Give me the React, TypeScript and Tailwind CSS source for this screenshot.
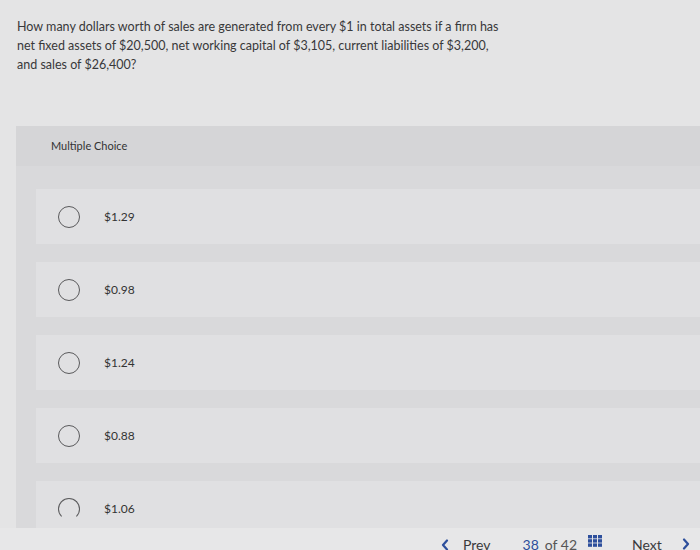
const options = ["$1.29", "$0.98", "$1.24", "$0.88", "$1.06"];

function GridIcon() {
  return (
    <svg width="14" height="12" viewBox="0 0 14 12" className="block">
      {[0, 1, 2].map((r) =>
        [0, 1, 2].map((c) => (
          <rect key={`${r}-${c}`} x={c * 5} y={r * 4.2} width="4" height="3.4" fill="#2d4f9c" />
        ))
      )}
    </svg>
  );
}

function Chevron({ dir }: { dir: "left" | "right" }) {
  return (
    <svg width="8" height="12" viewBox="0 0 8 12" className="block">
      <path
        d={dir === "left" ? "M6 1.5 L2 6 L6 10.5" : "M2 1.5 L6 6 L2 10.5"}
        fill="none"
        stroke="#2d4f9c"
        strokeWidth="2.2"
        strokeLinecap="round"
        strokeLinejoin="round"
      />
    </svg>
  );
}

export default function App() {
  return (
    <div
      className="relative w-[700px] h-[550px] overflow-hidden bg-[#e4e4e5] text-[#2f2f31]"
      style={{ fontFamily: "Lato, 'Open Sans', sans-serif" }}
    >
      <p className="pl-[17px] pr-[190px] pt-[17px] text-[12.5px] leading-[19px] text-[#38383a]">
        How many dollars worth of sales are generated from every $1 in total assets if a firm has net fixed
        assets of $20,500, net working capital of $3,105, current liabilities of $3,200, and sales of $26,400?
      </p>

      <div className="mt-[52px] ml-[16px] bg-[#d9d9db]">
        <div className="h-[40px] flex items-center pl-[35px] bg-[#d5d5d7] text-[11px] text-[#333]">
          Multiple Choice
        </div>
        <div className="pl-[20px] pt-[23px] flex flex-col gap-[18px]">
          {options.map((o, i) => (
            <div key={o} className="h-[55px] flex items-center pl-[22px] bg-[#e0e0e2]">
              <span
                className={
                  "w-[22px] h-[22px] rounded-full border-[1.5px] border-[#5a5a5c] shrink-0 " +
                  (i === 4 ? "border-b-transparent" : "")
                }
              />
              <span className="ml-[24px] text-[12px] text-[#333]">{o}</span>
            </div>
          ))}
        </div>
      </div>

      <div className="absolute left-0 right-0 top-[528px] h-[30px] bg-[#e7e7e8] flex items-start pt-[6px] text-[14px] text-[#3a3a3c]">
        <span className="ml-[441px] mt-[5px]">
          <Chevron dir="left" />
        </span>
        <span className="ml-[14px]">Prev</span>
        <span className="ml-[32px] text-[#2d4f9c]">38</span>
        <span className="ml-[6px] text-[#555]">of 42</span>
        <span className="ml-[11px] mt-[1px]">
          <GridIcon />
        </span>
        <span className="ml-[30px]">Next</span>
        <span className="ml-[20px] mt-[4px]">
          <Chevron dir="right" />
        </span>
      </div>
    </div>
  );
}
